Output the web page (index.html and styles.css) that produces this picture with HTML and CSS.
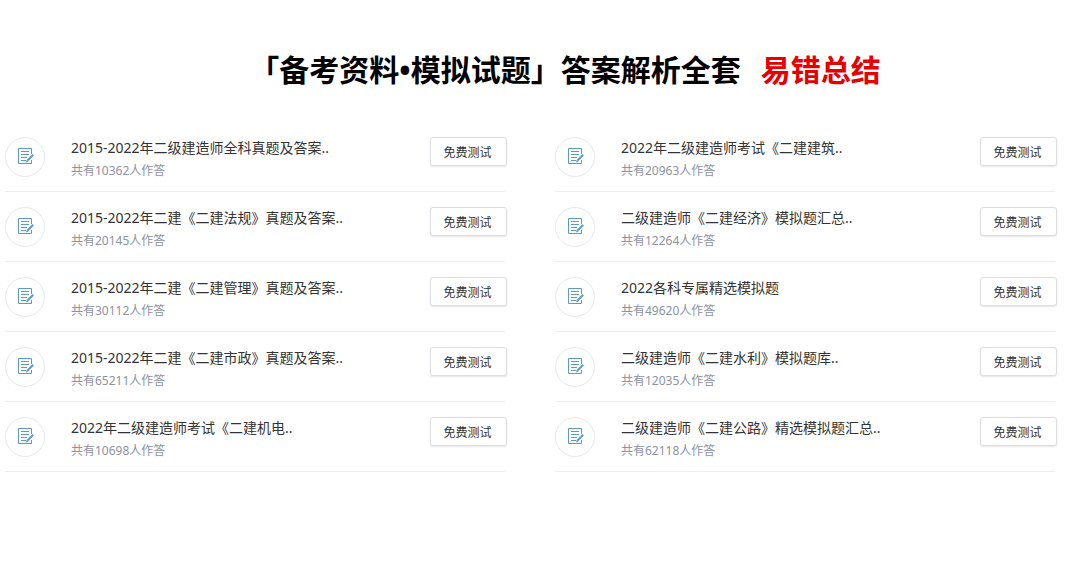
FILE: index.html
```html
<!DOCTYPE html>
<html lang="zh-CN">
<head>
  <meta charset="UTF-8">
  <meta name="viewport" content="width=device-width, initial-scale=1.0">
  <title>备考资料 模拟试题</title>
  <link rel="stylesheet" href="styles.css">
</head>

<body>
  <!-- Shared list icon -->
  <svg class="sprite" aria-hidden="true">
    <symbol id="icon-note" viewBox="0 0 18 18">
      <path d="M15.5 6V.5h-13v15h13V12M5 3.5h8M5 6.5h8M5 9.5h6M5 12.5h5" fill="none" stroke="currentColor"/>
      <path d="M17.2 6.8L11.5 12.5" fill="none" stroke="currentColor" stroke-width="2"/>
      <path d="M10.8 11.6l1.8 1.8-2.6 1z" fill="currentColor"/>
    </symbol>
  </svg>

  <main class="exam">
    <h1 class="exam-title">「备考资料•模拟试题」答案解析全套<span class="highlight">易错总结</span></h1>

    <div class="columns">
      <ul class="exam-list">
        <li class="exam-item">
          <span class="icon"><svg><use href="#icon-note"/></svg></span>
          <div class="info">
            <a class="name" href="#">2015-2022年二级建造师全科真题及答案..</a>
            <p class="count">共有10362人作答</p>
          </div>
          <button class="test-btn" type="button">免费测试</button>
        </li>
        <li class="exam-item">
          <span class="icon"><svg><use href="#icon-note"/></svg></span>
          <div class="info">
            <a class="name" href="#">2015-2022年二建《二建法规》真题及答案..</a>
            <p class="count">共有20145人作答</p>
          </div>
          <button class="test-btn" type="button">免费测试</button>
        </li>
        <li class="exam-item">
          <span class="icon"><svg><use href="#icon-note"/></svg></span>
          <div class="info">
            <a class="name" href="#">2015-2022年二建《二建管理》真题及答案..</a>
            <p class="count">共有30112人作答</p>
          </div>
          <button class="test-btn" type="button">免费测试</button>
        </li>
        <li class="exam-item">
          <span class="icon"><svg><use href="#icon-note"/></svg></span>
          <div class="info">
            <a class="name" href="#">2015-2022年二建《二建市政》真题及答案..</a>
            <p class="count">共有65211人作答</p>
          </div>
          <button class="test-btn" type="button">免费测试</button>
        </li>
        <li class="exam-item">
          <span class="icon"><svg><use href="#icon-note"/></svg></span>
          <div class="info">
            <a class="name" href="#">2022年二级建造师考试《二建机电..</a>
            <p class="count">共有10698人作答</p>
          </div>
          <button class="test-btn" type="button">免费测试</button>
        </li>
      </ul>

      <ul class="exam-list">
        <li class="exam-item">
          <span class="icon"><svg><use href="#icon-note"/></svg></span>
          <div class="info">
            <a class="name" href="#">2022年二级建造师考试《二建建筑..</a>
            <p class="count">共有20963人作答</p>
          </div>
          <button class="test-btn" type="button">免费测试</button>
        </li>
        <li class="exam-item">
          <span class="icon"><svg><use href="#icon-note"/></svg></span>
          <div class="info">
            <a class="name" href="#">二级建造师《二建经济》模拟题汇总..</a>
            <p class="count">共有12264人作答</p>
          </div>
          <button class="test-btn" type="button">免费测试</button>
        </li>
        <li class="exam-item">
          <span class="icon"><svg><use href="#icon-note"/></svg></span>
          <div class="info">
            <a class="name" href="#">2022各科专属精选模拟题</a>
            <p class="count">共有49620人作答</p>
          </div>
          <button class="test-btn" type="button">免费测试</button>
        </li>
        <li class="exam-item">
          <span class="icon"><svg><use href="#icon-note"/></svg></span>
          <div class="info">
            <a class="name" href="#">二级建造师《二建水利》模拟题库..</a>
            <p class="count">共有12035人作答</p>
          </div>
          <button class="test-btn" type="button">免费测试</button>
        </li>
        <li class="exam-item">
          <span class="icon"><svg><use href="#icon-note"/></svg></span>
          <div class="info">
            <a class="name" href="#">二级建造师《二建公路》精选模拟题汇总..</a>
            <p class="count">共有62118人作答</p>
          </div>
          <button class="test-btn" type="button">免费测试</button>
        </li>
      </ul>
    </div>
  </main>
</body>
</html>
```
FILE: styles.css
```css
* {
  box-sizing: border-box;
}

body {
  margin: 0;
  background: #fff;
  color: #333;
  font-family: "Noto Sans", "Noto Sans CJK SC", sans-serif;
  font-size: 14px;
}

.sprite {
  display: none;
}

.exam {
  padding: 50px 12px 0 5px;
}

/* Heading */
.exam-title {
  margin: 0 0 32px;
  padding-left: 70px;
  color: #000;
  font-size: 30px;
  font-weight: 700;
  line-height: 40px;
  text-align: center;
}

.exam-title .highlight {
  margin-left: 20px;
  color: #e60000;
}

/* Two lists side by side */
.columns {
  display: grid;
  grid-template-columns: 1fr 1fr;
  gap: 50px;
}

.exam-list {
  margin: 0;
  padding: 0;
  list-style: none;
}

.exam-item {
  display: flex;
  align-items: flex-start;
  height: 70px;
  padding-top: 15px;
  border-bottom: 1px solid #eee;
}

.icon {
  display: flex;
  flex: none;
  align-items: center;
  justify-content: center;
  width: 40px;
  height: 40px;
  margin-right: 26px;
  border: 1px solid #e6e8ec;
  border-radius: 50%;
  color: #5b9bcb;
}

.icon svg {
  width: 18px;
  height: 18px;
}

.info {
  flex: 1;
  min-width: 0;
}

.name {
  display: block;
  color: #333;
  line-height: 22px;
  text-decoration: none;
  white-space: nowrap;
}

.count {
  margin: 2px 0 0;
  color: #8d92a1;
  font-size: 12px;
  line-height: 20px;
}

/* Button hangs slightly past the divider */
.test-btn {
  flex: none;
  width: 77px;
  height: 29px;
  margin-right: -2px;
  padding: 0 2px 0 0;
  border: 1px solid #dcdee2;
  border-radius: 3px;
  background: #fff;
  box-shadow: 0 1px 2px rgba(0, 0, 0, 0.1);
  color: #333;
  font-family: inherit;
  font-size: 12px;
  cursor: pointer;
}
```
